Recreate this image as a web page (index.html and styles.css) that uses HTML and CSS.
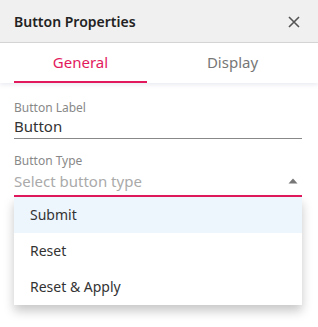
FILE: index.html
```html
<!DOCTYPE html>
<html>

<head>
    <meta charset="UTF-8">
    <title>Button Properties</title>
    <link rel="stylesheet" href="styles.css">
</head>

<body>
    <div class="panel">
        <div class="header">
            <span class="title">Button Properties</span>
            <svg class="close" width="12" height="12" viewBox="0 0 12 12">
                <path d="M1 1 L11 11 M11 1 L1 11" stroke="#555" stroke-width="1.6" fill="none" />
            </svg>
        </div>

        <div class="tabs">
            <div class="tab active">General</div>
            <div class="tab">Display</div>
        </div>

        <div class="form">
            <div class="field">
                <div class="label">Button Label</div>
                <div class="input">Button</div>
            </div>

            <div class="field select-field">
                <div class="label">Button Type</div>
                <div class="input select">
                    <span class="placeholder">Select button type</span>
                    <svg class="arrow" width="10" height="6" viewBox="0 0 10 6">
                        <path d="M0.5 5.5 L5 0.5 L9.5 5.5 Z" fill="#777" />
                    </svg>
                </div>
                <ul class="menu">
                    <li class="hover">Submit</li>
                    <li>Reset</li>
                    <li>Reset &amp; Apply</li>
                </ul>
            </div>
        </div>
    </div>
</body>

</html>
```

FILE: styles.css
```css
html,
body {
    margin: 0;
    background: #fff;
}

body {
    font-family: "Noto Sans", sans-serif;
    color: #333;
}

.header {
    height: 42px;
    display: flex;
    align-items: center;
    justify-content: space-between;
    padding: 0 18px 0 14px;
    background: #f0f0f0;
    border-bottom: 1px solid #d6d6d6;
}

.title {
    font-size: 14px;
    font-weight: 600;
    color: #222;
}

.close {
    margin-top: 1px;
}

.tabs {
    display: grid;
    grid-template-columns: 133px 1fr;
    padding-left: 14px;
    height: 40px;
    box-shadow: 0 2px 4px rgba(120, 130, 170, 0.15);
}

.tab {
    display: flex;
    align-items: center;
    justify-content: center;
    font-size: 15px;
    color: #777;
    border-bottom: 2px solid transparent;
}

.tab.active {
    color: #e3195d;
    border-bottom-color: #e3195d;
}

.form {
    padding: 17px 16px 16px 14px;
}

.field {
    margin-bottom: 14px;
}

.field:last-child {
    margin-bottom: 0;
}

.label {
    font-size: 12px;
    line-height: 16px;
    color: #888;
}

.input {
    font-size: 15px;
    line-height: 20px;
    padding-bottom: 2px;
    border-bottom: 1px solid #888;
}

.select {
    display: flex;
    align-items: center;
    justify-content: space-between;
    padding-top: 2px;
    padding-bottom: 4px;
    border-bottom: 2px solid #e3195d;
}

.placeholder {
    color: #aaa;
}

.arrow {
    margin-right: 4px;
}

.menu {
    margin: 0;
    padding: 0;
    list-style: none;
    background: #fff;
    box-shadow: 0 6px 10px rgba(0, 0, 0, 0.22);
}

.menu li {
    height: 36px;
    line-height: 36px;
    padding-left: 16px;
    font-size: 14px;
    color: #333;
}

.menu li.hover {
    background: #edf6fd;
}
```
